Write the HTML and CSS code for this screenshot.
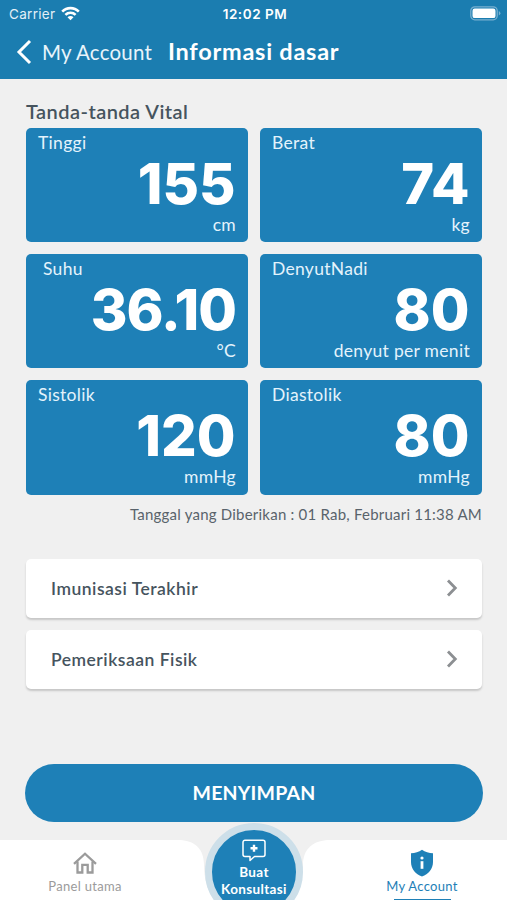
FILE: index.html
```html
<!DOCTYPE html>
<html lang="id">
<head>
<meta charset="utf-8">
<title>Informasi dasar</title>
<link rel="stylesheet" href="styles.css">
</head>
<body>
<div class="app">
  <header class="header">
    <div class="status">
      <div class="carrier"><span>Carrier</span>
        <svg width="19" height="15" viewBox="0 0 19 15" fill="none" stroke="#fff" stroke-width="2.600"><path d="M1.200 5.600C5.800.9 13.200.9 17.800 5.600"/><path d="M4.400 8.900c2.800-2.800 7.400-2.800 10.200 0"/><path d="M9.500 14.300 6.500 11.200c1.700-1.600 4.300-1.600 6 0z" fill="#fff" stroke="none"/></svg>
      </div>
      <div class="clock">12:02 PM</div>
      <svg class="battery" width="31" height="15" viewBox="0 0 31 15"><rect x=".8" y=".8" width="26.400" height="13" rx="4" fill="none" stroke="#79b0d0" stroke-width="1.300"/><rect x="2.500" y="2.500" width="23" height="9.600" rx="2.200" fill="#fff"/><path d="M28.800 5v4.600q1.600-.8 1.600-2.300T28.800 5" fill="#79b0d0"/></svg>
    </div>
    <div class="nav">
      <svg width="16" height="26" viewBox="0 0 16 26" fill="none" stroke="#fff" stroke-width="3"><path d="M14 2 3 13l11 11"/></svg>
      <span class="back">My Account</span>
      <h1>Informasi dasar</h1>
    </div>
  </header>
  <main>
    <h2>Tanda-tanda Vital</h2>
    <section class="grid">
      <article class="vital"><span class="label">Tinggi</span><b>155</b><span class="unit">cm</span></article>
      <article class="vital"><span class="label">Berat</span><b>74</b><span class="unit">kg</span></article>
      <article class="vital"><span class="label indent">Suhu</span><b class="long">36.10</b><span class="unit">°C</span></article>
      <article class="vital"><span class="label">DenyutNadi</span><b>80</b><span class="unit">denyut per menit</span></article>
      <article class="vital"><span class="label">Sistolik</span><b>120</b><span class="unit">mmHg</span></article>
      <article class="vital"><span class="label">Diastolik</span><b>80</b><span class="unit">mmHg</span></article>
    </section>
    <p class="date">Tanggal yang Diberikan : 01 Rab, Februari 11:38 AM</p>
    <section class="links">
      <div class="link"><span>Imunisasi Terakhir</span><svg width="12" height="18" viewBox="0 0 12 18"><path d="m2 1.500 7.300 7.500L2 16.500"/></svg></div>
      <div class="link"><span>Pemeriksaan Fisik</span><svg width="12" height="18" viewBox="0 0 12 18"><path d="m2 1.500 7.300 7.500L2 16.500"/></svg></div>
    </section>
    <button class="save">MENYIMPAN</button>
  </main>
  <footer class="tabs">
    <svg class="tabs-bg" width="507" height="60" viewBox="0 0 507 60" fill="#fff"><path d="M0 0H178C195 0 204 9 204 25 204 38 207 51 215 60H0z"/><path d="M507 0H330C313 0 303 9 303 25 303 38 301 51 293 60H507z"/></svg>
    <div class="tab home">
      <svg width="24" height="22" viewBox="0 0 24 22" fill="none" stroke="#9b9b9b" stroke-width="2.300"><path d="M1 11.800 12 1.700l11 10.100"/><path d="M4.500 9.500V20.500H9.300V12.800h5.400V20.500h4.800V9.500"/></svg>
      <span>Panel utama</span>
    </div>
    <div class="consult">
      <svg width="24" height="23" viewBox="0 0 24 23" fill="none" stroke="#fff" stroke-width="1.500"><path d="M3 1.200H21a2 2 0 0 1 2 2V15.500a2 2 0 0 1-2 2H12.500L8 21.500V17.500H3a2 2 0 0 1-2-2V3.200a2 2 0 0 1 2-2z" stroke-linejoin="round"/><path d="M12 5.800V12.800M8.500 9.300h7" stroke-width="2.400"/></svg>
      <span>Buat</span><span>Konsultasi</span>
    </div>
    <div class="tab account">
      <svg width="24" height="28" viewBox="0 0 24 28"><path d="M12 .8c3 2.500 7 3.300 11 3.400V13c0 7-4.500 12-11 14.500C5.500 25 1 20 1 13V4.200C5 4.100 9 3.300 12 .8z" fill="#1e80b7"/><circle cx="12" cy="9" r="1.600" fill="#fff"/><path d="M12 12.200v7.600" stroke="#fff" stroke-width="2.800"/></svg>
      <span>My Account</span>
    </div>
  </footer>
</div>
</body>
</html>
```
FILE: styles.css
```css
* { box-sizing: border-box; }
body { margin: 0; font-family: Lato, "Liberation Sans", sans-serif; }
h1, h2, p { margin: 0; }
svg { display: block; flex: none; }
.app { width: 507px; height: 900px; overflow: hidden; display: flex; flex-direction: column; background: #f0f0f0; }
.header { height: 79px; flex: none; background: #1b7db0; color: #fff; }
.status { height: 27px; display: grid; grid-template-columns: 1fr auto 1fr; align-items: center; padding: 0 6px 0 9px; font-family: Inter, sans-serif; }
.carrier { display: flex; align-items: center; gap: 6px; font-size: 13.500px; letter-spacing: .3px; color: #e3f0f7; }
.clock { font-size: 13.500px; font-weight: 600; letter-spacing: .55px; }
.battery { justify-self: end; }
.nav { height: 50px; display: flex; align-items: center; padding-left: 16px; }
.back { font-size: 20.500px; margin-left: 10px; width: 126px; white-space: nowrap; color: #e8f4fb; letter-spacing: .2px; }
h1 { font: 700 23.500px Lato, sans-serif; letter-spacing: .75px; white-space: nowrap; margin-top: -2px; }
main { padding: 0 25px 0 26px; }
h2 { height: 49px; padding-top: 19px; font-size: 20px; line-height: 27px; font-weight: 600; letter-spacing: .45px; color: #46545e; }
.grid { display: grid; grid-template-columns: 222px 222px; gap: 12px; grid-auto-rows: 114.200px; }
.vital { background: #1e80b7; border-radius: 5px; padding: 4px 12px 6px; display: flex; flex-direction: column; color: #fff; }
.label, .unit { font-size: 17.500px; line-height: 22px; color: #e4f3fc; letter-spacing: .3px; }
.indent { margin-left: 5px; }
.vital b { align-self: flex-end; margin-right: .5px; font: 800 56px/60px Inter, sans-serif; letter-spacing: 0; }
.vital .long { letter-spacing: -1px; margin-right: 0; }
.unit { align-self: flex-end; }
.date { text-align: right; margin-top: 9px; font-size: 15px; line-height: 20px; letter-spacing: .22px; color: #59636b; white-space: nowrap; }
.links { margin-top: 35px; display: grid; gap: 12px; }
.link { height: 59px; background: #fff; border-radius: 5px; box-shadow: 0 2px 2px #c7c7c7; display: flex; align-items: center; justify-content: space-between; padding: 0 24px 0 25px; font-size: 17.500px; font-weight: 600; letter-spacing: .5px; color: #46545e; }
.link path { fill: none; stroke: #8c8f92; stroke-width: 2.800; }
.save { display: block; width: 458px; height: 58px; margin: 75px 0 0 -1px; border: 0; border-radius: 29px; background: #1e80b7; color: #fff; font: 700 19.500px Lato, sans-serif; letter-spacing: .2px; }
.tabs { position: relative; height: 60px; margin-top: auto; flex: none; display: flex; justify-content: space-between; }
.tabs-bg { position: absolute; left: 0; top: 0; }
.tab { position: relative; width: 170px; display: flex; flex-direction: column; align-items: center; font-size: 13px; line-height: 16px; letter-spacing: .3px; }
.home { color: #9b9b9b; padding-top: 12px; gap: 4px; }
.account { color: #1e80b7; padding-top: 9px; gap: 1px; }
.account::after { content: ""; width: 57px; height: 2px; margin-top: 4px; background: #1e80b7; }
.consult { position: absolute; left: 205px; top: -17px; width: 98px; height: 98px; border: 7px solid #cddfe9; border-radius: 50%; background: #1e80b7; color: #fff; display: flex; flex-direction: column; align-items: center; padding-top: 9px; font-size: 13.500px; line-height: 17px; font-weight: 700; letter-spacing: .35px; }
.consult svg { margin-bottom: 2px; }
```
